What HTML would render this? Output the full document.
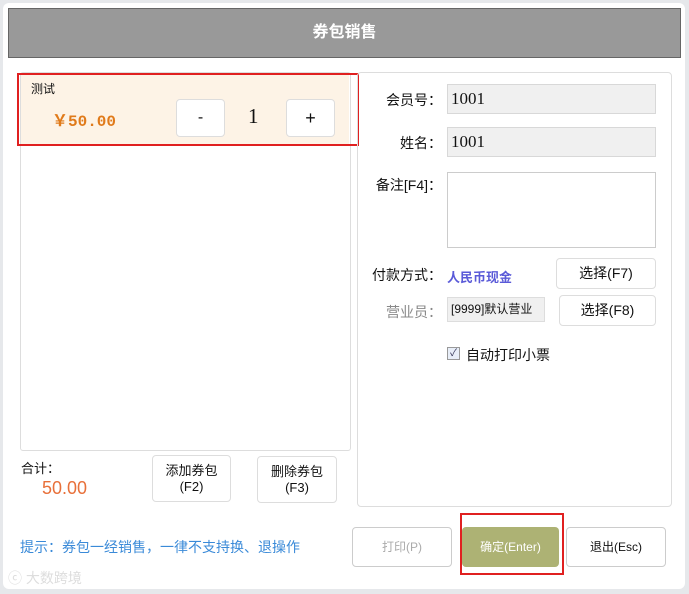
<!DOCTYPE html><html><head><meta charset="utf-8"><style>
body{margin:0;width:689px;height:594px;background:#e6e8eb;position:relative;overflow:hidden;font-family:"Liberation Sans","Noto Sans CJK SC",sans-serif;font-size:14px;color:#111}
.a{position:absolute}
.btn{position:absolute;background:#fff;border:1px solid #ddd;border-radius:4px;text-align:center;box-sizing:border-box}
.inp{position:absolute;background:#f0f0f0;border:1px solid #d8d8d8;box-sizing:border-box;font-size:17px;padding-left:3px;line-height:28px;font-family:"Liberation Serif","Noto Serif CJK SC",serif}
.lbl{position:absolute;text-align:right;font-size:14px}
</style></head><body>
<div class="a" style="left:3px;top:3px;width:682px;height:586px;background:#fff;border-radius:6px"></div>
<div class="a" style="left:8px;top:8px;width:671px;height:48px;background:#999;border:1px solid #666;color:#fff;font-size:16px;font-weight:bold;text-align:center;line-height:48px">券包销售</div>
<div class="a" style="left:20px;top:72px;width:329px;height:377px;border:1px solid #ddd;border-radius:3px"></div>
<div class="a" style="left:21px;top:74px;width:328px;height:70px;background:#fdf3e6"></div>
<div class="a" style="left:17px;top:73px;width:342px;height:73px;border:2px solid #e02020;box-sizing:border-box"></div>
<div class="a" style="left:31px;top:80px;font-size:12px">测试</div>
<div class="a" style="left:52px;top:107px;font-size:16px;font-weight:bold;color:#e07a1a;font-family:'Liberation Mono','Noto Sans CJK SC',monospace">￥50.00</div>
<div class="btn" style="left:176px;top:99px;width:49px;height:38px;line-height:36px;font-size:16px">-</div>
<div class="a" style="left:248px;top:104px;font-size:21px;font-family:'Liberation Serif',serif">1</div>
<div class="btn" style="left:286px;top:99px;width:49px;height:38px;line-height:36px;font-size:18px">+</div>
<div class="a" style="left:357px;top:72px;width:313px;height:433px;border:1px solid #ddd;border-radius:4px"></div>
<div class="lbl" style="left:360px;top:90px;width:82px">会员号：</div>
<div class="inp" style="left:447px;top:84px;width:209px;height:30px">1001</div>
<div class="lbl" style="left:360px;top:133px;width:82px">姓名：</div>
<div class="inp" style="left:447px;top:127px;width:209px;height:30px">1001</div>
<div class="lbl" style="left:360px;top:175px;width:82px">备注[F4]：</div>
<div class="a" style="left:447px;top:172px;width:209px;height:76px;border:1px solid #ccc;box-sizing:border-box"></div>
<div class="lbl" style="left:360px;top:265px;width:82px">付款方式：</div>
<div class="a" style="left:447px;top:267px;font-size:13px;font-weight:bold;color:#5a5ad8">人民币现金</div>
<div class="btn" style="left:556px;top:258px;width:100px;height:31px;line-height:29px">选择(F7)</div>
<div class="lbl" style="left:360px;top:302px;width:82px;color:#888">营业员：</div>
<div class="a" style="left:447px;top:297px;width:98px;height:25px;background:#f0f0f0;border:1px solid #ddd;box-sizing:border-box;font-size:12px;line-height:23px;padding-left:3px;overflow:hidden;white-space:nowrap">[9999]默认营业</div>
<div class="btn" style="left:559px;top:295px;width:97px;height:31px;line-height:29px">选择(F8)</div>
<div class="a" style="left:447px;top:347px;width:11px;height:11px;border:1px solid #999;background:#e8eef8;font-size:10px;line-height:11px;text-align:center;color:#335">✓</div>
<div class="a" style="left:466px;top:345px">自动打印小票</div>
<div class="a" style="left:21px;top:458px;font-size:13px">合计：</div>
<div class="a" style="left:42px;top:478px;font-size:18px;color:#e8703a">50.00</div>
<div class="btn" style="left:152px;top:455px;width:79px;height:47px;font-size:13px;line-height:16px;padding-top:7px">添加券包<br>(F2)</div>
<div class="btn" style="left:257px;top:456px;width:80px;height:47px;font-size:13px;line-height:16px;padding-top:7px">删除券包<br>(F3)</div>
<div class="a" style="left:20px;top:537px;font-size:14px;color:#3a8ad8">提示：券包一经销售，一律不支持换、退操作</div>
<div class="btn" style="left:352px;top:527px;width:100px;height:40px;line-height:38px;font-size:12px;color:#aaa;border-color:#ccc">打印(P)</div>
<div class="a" style="left:462px;top:527px;width:97px;height:40px;background:#adb274;border-radius:4px;color:#fff;font-size:12px;text-align:center;line-height:40px">确定(Enter)</div>
<div class="a" style="left:460px;top:513px;width:104px;height:62px;border:2px solid #e02020;box-sizing:border-box"></div>
<div class="btn" style="left:566px;top:527px;width:100px;height:40px;line-height:38px;font-size:12px;border-color:#ccc">退出(Esc)</div>
<div class="a" style="left:8px;top:568px;font-size:14px;color:#ddd">ⓒ 大数跨境</div>
</body></html>
